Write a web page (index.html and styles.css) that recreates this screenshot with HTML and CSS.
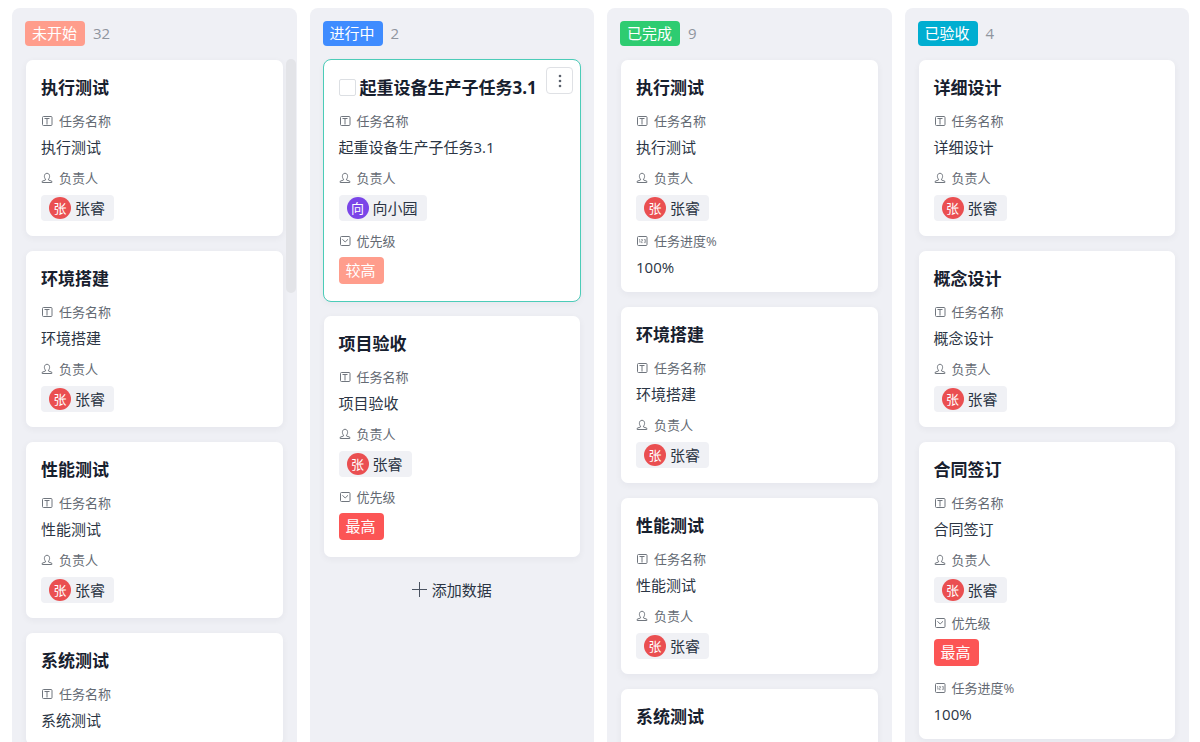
FILE: index.html
```html
<!DOCTYPE html>
<html lang="zh-CN">
<head>
<meta charset="utf-8">
<meta name="viewport" content="width=device-width, initial-scale=1">
<title>任务看板</title>
<link rel="stylesheet" href="styles.css">
</head>
<body>
<svg class="sprite" aria-hidden="true">
  <symbol id="i-text" viewBox="0 0 12 12"><rect x="1.5" y="1.5" width="9.5" height="9" rx="1"/><path d="M3.500 3.500H8.500M6 3.500V9.500"/></symbol>
  <symbol id="i-user" viewBox="0 0 12 12"><path d="M4.500 7.200C2.600 5 3.200 1.300 6 1.300S9.400 5 7.500 7.200V8L10.800 9.200V10.500H1.200V9.200L4.500 8Z"/></symbol>
  <symbol id="i-select" viewBox="0 0 12 12"><rect x="1.500" y="1.500" width="9.500" height="9" rx="1"/><path d="M3.500 4.300L6.200 7L9 4.300"/></symbol>
  <symbol id="i-number" viewBox="0 0 12 12"><rect x="1.500" y="1.500" width="9.500" height="9" rx="1"/><path class="thin" d="M3 4.800L3.700 4.400V7.600M5 4.500H6.500V6H5V7.600H6.700M7.900 4.500H9.400V7.600H7.900M8.200 6H9.400"/></symbol>
</svg>
<main class="board">

  <section class="column">
    <header class="column-head"><span class="tag tag-head salmon">未开始</span><span class="count">32</span></header>
    <div class="cards">
      <article class="card">
        <h2 class="title">执行测试</h2>
        <div class="label"><svg class="icon"><use href="#i-text"/></svg>任务名称</div>
        <p class="value">执行测试</p>
        <div class="label"><svg class="icon"><use href="#i-user"/></svg>负责人</div>
        <div class="chip"><span class="avatar red">张</span>张睿</div>
      </article>
      <article class="card">
        <h2 class="title">环境搭建</h2>
        <div class="label"><svg class="icon"><use href="#i-text"/></svg>任务名称</div>
        <p class="value">环境搭建</p>
        <div class="label"><svg class="icon"><use href="#i-user"/></svg>负责人</div>
        <div class="chip"><span class="avatar red">张</span>张睿</div>
      </article>
      <article class="card">
        <h2 class="title">性能测试</h2>
        <div class="label"><svg class="icon"><use href="#i-text"/></svg>任务名称</div>
        <p class="value">性能测试</p>
        <div class="label"><svg class="icon"><use href="#i-user"/></svg>负责人</div>
        <div class="chip"><span class="avatar red">张</span>张睿</div>
      </article>
      <article class="card">
        <h2 class="title">系统测试</h2>
        <div class="label"><svg class="icon"><use href="#i-text"/></svg>任务名称</div>
        <p class="value">系统测试</p>
      </article>
    </div>
    <div class="scroll-thumb"></div>
  </section>

  <section class="column">
    <header class="column-head"><span class="tag tag-head blue">进行中</span><span class="count">2</span></header>
    <div class="cards">
      <article class="card selected">
        <h2 class="title"><label class="pick"><input class="check" type="checkbox">起重设备生产子任务3.1</label></h2>
        <button class="more" type="button" aria-label="更多"><svg class="more-icon" viewBox="0 0 16 16"><circle cx="8" cy="3" r="1.300"/><circle cx="8" cy="8" r="1.300"/><circle cx="8" cy="13" r="1.300"/></svg></button>
        <div class="label"><svg class="icon"><use href="#i-text"/></svg>任务名称</div>
        <p class="value">起重设备生产子任务3.1</p>
        <div class="label"><svg class="icon"><use href="#i-user"/></svg>负责人</div>
        <div class="chip"><span class="avatar purple">向</span>向小园</div>
        <div class="label"><svg class="icon"><use href="#i-select"/></svg>优先级</div>
        <div class="tag tag-field salmon">较高</div>
      </article>
      <article class="card">
        <h2 class="title">项目验收</h2>
        <div class="label"><svg class="icon"><use href="#i-text"/></svg>任务名称</div>
        <p class="value">项目验收</p>
        <div class="label"><svg class="icon"><use href="#i-user"/></svg>负责人</div>
        <div class="chip"><span class="avatar red">张</span>张睿</div>
        <div class="label"><svg class="icon"><use href="#i-select"/></svg>优先级</div>
        <div class="tag tag-field hot">最高</div>
      </article>
      <button class="add" type="button"><svg class="plus" viewBox="0 0 15 15"><path d="M7.500 0V15M0 7.500H15"/></svg>添加数据</button>
    </div>
  </section>

  <section class="column">
    <header class="column-head"><span class="tag tag-head green">已完成</span><span class="count">9</span></header>
    <div class="cards">
      <article class="card">
        <h2 class="title">执行测试</h2>
        <div class="label"><svg class="icon"><use href="#i-text"/></svg>任务名称</div>
        <p class="value">执行测试</p>
        <div class="label"><svg class="icon"><use href="#i-user"/></svg>负责人</div>
        <div class="chip"><span class="avatar red">张</span>张睿</div>
        <div class="label"><svg class="icon"><use href="#i-number"/></svg>任务进度%</div>
        <p class="value">100%</p>
      </article>
      <article class="card">
        <h2 class="title">环境搭建</h2>
        <div class="label"><svg class="icon"><use href="#i-text"/></svg>任务名称</div>
        <p class="value">环境搭建</p>
        <div class="label"><svg class="icon"><use href="#i-user"/></svg>负责人</div>
        <div class="chip"><span class="avatar red">张</span>张睿</div>
      </article>
      <article class="card">
        <h2 class="title">性能测试</h2>
        <div class="label"><svg class="icon"><use href="#i-text"/></svg>任务名称</div>
        <p class="value">性能测试</p>
        <div class="label"><svg class="icon"><use href="#i-user"/></svg>负责人</div>
        <div class="chip"><span class="avatar red">张</span>张睿</div>
      </article>
      <article class="card">
        <h2 class="title">系统测试</h2>
      </article>
    </div>
  </section>

  <section class="column">
    <header class="column-head"><span class="tag tag-head cyan">已验收</span><span class="count">4</span></header>
    <div class="cards">
      <article class="card">
        <h2 class="title">详细设计</h2>
        <div class="label"><svg class="icon"><use href="#i-text"/></svg>任务名称</div>
        <p class="value">详细设计</p>
        <div class="label"><svg class="icon"><use href="#i-user"/></svg>负责人</div>
        <div class="chip"><span class="avatar red">张</span>张睿</div>
      </article>
      <article class="card">
        <h2 class="title">概念设计</h2>
        <div class="label"><svg class="icon"><use href="#i-text"/></svg>任务名称</div>
        <p class="value">概念设计</p>
        <div class="label"><svg class="icon"><use href="#i-user"/></svg>负责人</div>
        <div class="chip"><span class="avatar red">张</span>张睿</div>
      </article>
      <article class="card">
        <h2 class="title">合同签订</h2>
        <div class="label"><svg class="icon"><use href="#i-text"/></svg>任务名称</div>
        <p class="value">合同签订</p>
        <div class="label"><svg class="icon"><use href="#i-user"/></svg>负责人</div>
        <div class="chip"><span class="avatar red">张</span>张睿</div>
        <div class="label"><svg class="icon"><use href="#i-select"/></svg>优先级</div>
        <div class="tag tag-field hot">最高</div>
        <div class="label"><svg class="icon"><use href="#i-number"/></svg>任务进度%</div>
        <p class="value">100%</p>
      </article>
    </div>
  </section>

</main>
</body>
</html>
```
FILE: styles.css
```css
* { box-sizing: border-box; }

body {
  margin: 0;
  background: #fff;
  color: #2b3544;
  font-family: "Open Sans", "Noto Sans CJK SC", sans-serif;
  font-size: 15px;
}

.sprite { position: absolute; width: 0; height: 0; }

.board {
  display: grid;
  grid-template-columns: repeat(4, minmax(0, 1fr));
  gap: 13px;
  height: 100vh;
  padding: 8px 11px 0 12px;
  overflow: hidden;
}

.column {
  position: relative;
  display: flex;
  flex-direction: column;
  gap: 13px;
  min-height: 0;
  padding: 13px 13px 0;
  background: #eff0f5;
  border-radius: 8px 8px 0 0;
  overflow: hidden;
}

.column-head { display: flex; align-items: center; gap: 8px; }
.count { color: #8f959e; line-height: 25px; }

.tag {
  width: fit-content;
  padding: 0 8px 0 7px;
  border-radius: 4px;
  color: #fff;
}
.tag-head { line-height: 25px; }
.tag-field { margin: 6px 0 12px; line-height: 27px; }

.salmon { background: #ff9d8c; }
.blue { background: #3f8cff; }
.green { background: #2ecc71; }
.cyan { background: #00aed1; }
.hot { background: #fc5555; }
.red { background: #ea4f51; }
.purple { background: #7a45e8; }

.cards { display: flex; flex-direction: column; gap: 13px; }

.card {
  position: relative;
  padding: 15px;
  border: 1px solid transparent;
  border-radius: 8px;
  background: #fff padding-box;
  box-shadow: 0 2px 6px rgba(31, 35, 41, 0.04);
}
.selected { border-color: #4cccb8; }

.title {
  margin: 0 0 10px;
  color: #17202e;
  font-size: 17px;
  font-weight: 700;
  line-height: 26px;
  white-space: nowrap;
}

.pick { display: flex; align-items: center; gap: 4px; }
.check {
  appearance: none;
  flex: none;
  width: 17px;
  height: 17px;
  margin: 0 0 2px;
  border: 1px solid #dcdfe3;
  border-radius: 2px;
  background: #fff;
}

.more {
  position: absolute;
  top: 7px;
  right: 7px;
  display: grid;
  place-items: center;
  width: 27px;
  height: 27px;
  padding: 0;
  border: 1px solid #dfe1e5;
  border-radius: 4px;
  background: #fff;
}
.more-icon { width: 16px; height: 16px; fill: #5b626d; }

.label {
  display: flex;
  align-items: center;
  gap: 6px;
  color: #646a73;
  font-size: 13px;
  line-height: 20px;
}
.icon {
  width: 12px;
  height: 12px;
  fill: none;
  stroke: #70767e;
  stroke-width: 1;
}
.thin { stroke-width: 0.6; }

.value { margin: 7px 0 11px; line-height: 19px; }

.chip {
  display: flex;
  align-items: center;
  gap: 4px;
  width: fit-content;
  height: 26px;
  margin: 7px 0 10px;
  padding: 0 9px 0 8px;
  border-radius: 4px;
  background: #f0f1f5;
  line-height: 26px;
}
.avatar {
  width: 22px;
  height: 22px;
  border-radius: 50%;
  color: #fff;
  font-size: 13px;
  line-height: 22px;
  text-align: center;
}

.value:last-child,
.chip:last-child { margin-bottom: 0; }
.tag-field:last-child { margin-bottom: 2px; }

.scroll-thumb {
  position: absolute;
  top: 51px;
  right: 1px;
  width: 10px;
  height: 234px;
  border-radius: 5px;
  background: #e3e4e8;
}

.add {
  display: flex;
  align-items: center;
  justify-content: center;
  gap: 5px;
  height: 36px;
  padding: 0;
  border: 0;
  background: none;
  color: #2b3544;
  font: inherit;
}
.plus { width: 15px; height: 15px; fill: none; stroke: #4a5260; stroke-width: 1; }
```
